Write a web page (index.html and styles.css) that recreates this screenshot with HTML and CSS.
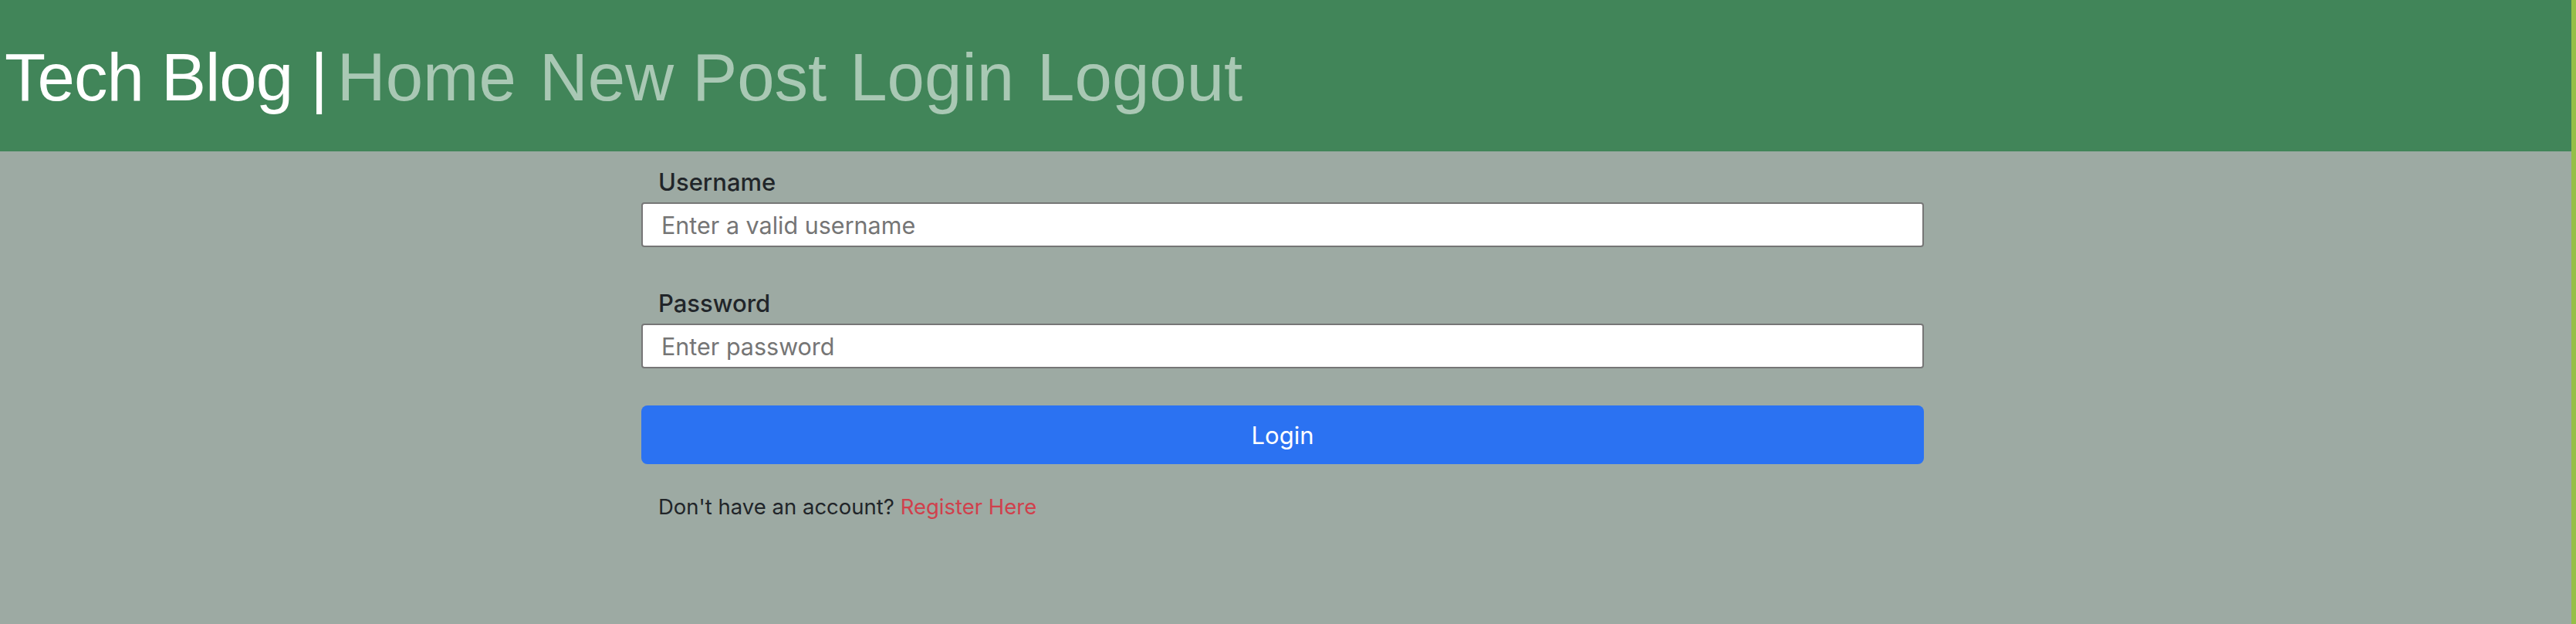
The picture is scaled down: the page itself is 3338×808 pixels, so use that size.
FILE: index.html
```html
<!DOCTYPE html>
<html lang="en">
<head>
<meta charset="utf-8">
<title>Tech Blog | Login</title>
<link rel="stylesheet" href="styles.css">
</head>
<body>
  <header class="site-header">
    <h1 class="brand">Tech Blog |</h1>
    <nav class="nav">
      <a class="nav-link" href="#">Home</a>
      <a class="nav-link" href="#">New Post</a>
      <a class="nav-link" href="#">Login</a>
      <a class="nav-link" href="#">Logout</a>
    </nav>
  </header>
  <main class="main">
    <form class="login-form">
      <div class="field">
        <label class="field-label" for="username">Username</label>
        <input class="field-input" id="username" type="text" placeholder="Enter a valid username">
      </div>
      <div class="field">
        <label class="field-label" for="password">Password</label>
        <input class="field-input" id="password" type="password" placeholder="Enter password">
      </div>
      <button class="btn-login" type="button">Login</button>
      <p class="signup">Don't have an account? <a class="signup-link" href="#">Register Here</a></p>
    </form>
  </main>
</body>
</html>
```

FILE: styles.css
```css
html, body {
  margin: 0;
  padding: 0;
}

body {
  min-height: 100vh;
  box-sizing: border-box;
  background: #9daaa3;
  border-right: 6px solid #95bf48;
  font-family: "Inter", "Liberation Sans", sans-serif;
  color: #212529;
}

.site-header {
  display: flex;
  align-items: baseline;
  box-sizing: border-box;
  height: 196px;
  padding: 56px 0 0 6px;
  background: #418559;
  font-family: "Liberation Sans", Arial, sans-serif;
  font-size: 87px;
  line-height: 87px;
}

.brand {
  margin: 0 13px 0 0;
  font-size: 87px;
  font-weight: 400;
  line-height: 87px;
  letter-spacing: -1px;
  color: #ffffff;
  white-space: nowrap;
}

.nav {
  display: flex;
  align-items: baseline;
  gap: 30px;
}

.nav-link {
  color: rgba(255, 255, 255, 0.55);
  text-decoration: none;
  white-space: nowrap;
}

.main {
  padding-top: 18px;
}

.login-form {
  width: 1662px;
  margin-left: 831px;
  display: flex;
  flex-direction: column;
}

.field {
  display: flex;
  flex-direction: column;
}

.field + .field {
  margin-top: 51px;
}

.field-label {
  padding-left: 22px;
  font-size: 31px;
  font-weight: 500;
  line-height: 43px;
  color: #212529;
}

.field-input {
  margin-top: 5px;
  box-sizing: border-box;
  height: 58px;
  padding: 0 24px;
  border: 2px solid #767676;
  border-radius: 4px;
  background: #ffffff;
  font-family: "Inter", "Liberation Sans", sans-serif;
  font-size: 30.5px;
  color: #212529;
  outline: none;
}

.field-input::placeholder {
  color: #757575;
}

.btn-login {
  margin-top: 48px;
  height: 76px;
  border: none;
  border-radius: 8px;
  background: #2b72f2;
  color: #ffffff;
  font-family: "Inter", "Liberation Sans", sans-serif;
  font-size: 31px;
  font-weight: 400;
  cursor: pointer;
}

.signup {
  margin: 34px 0 0;
  padding-left: 22px;
  font-size: 27.5px;
  line-height: 42px;
  color: #212529;
}

.signup-link {
  color: #d0404c;
  text-decoration: none;
}
```
